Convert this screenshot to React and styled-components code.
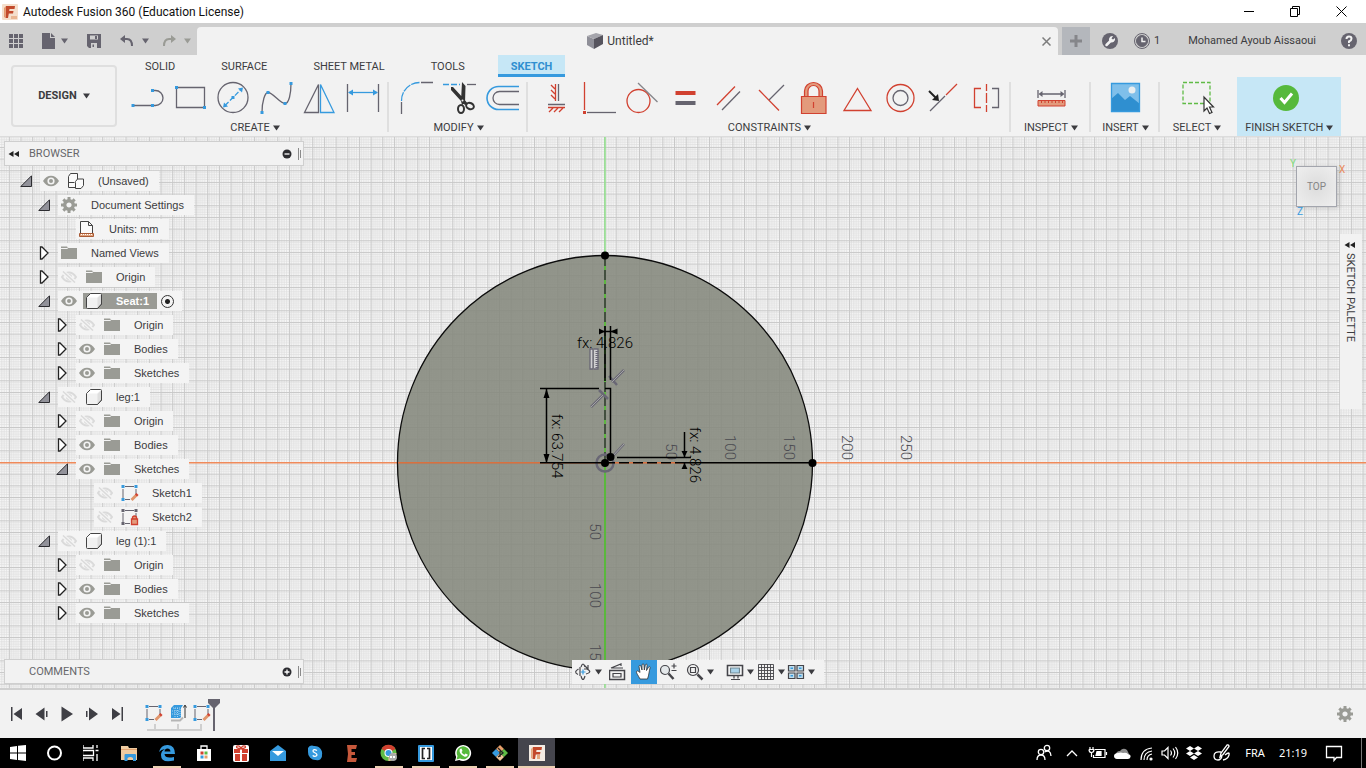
import React from 'react';
import styled, { createGlobalStyle } from 'styled-components';

const INK = '#66646f';
const RED = '#d14130';
const BLUE = '#369ade';
const GREY = '#9a9b95';

const GlobalStyle = createGlobalStyle`
  * {
    box-sizing: border-box;
  }

  body {
    margin: 0;
    overflow: hidden;
    color: #3c3c40;
    font-family: Roboto, 'Liberation Sans', sans-serif;
    font-size: 11px;
    line-height: 16px;
  }

  button {
    display: flex;
    align-items: center;
    justify-content: center;
    margin: 0;
    border: 0;
    padding: 0;
    color: inherit;
    background: none;
    font: inherit;
  }

  h1, h2, p, ul {
    margin: 0;
    padding: 0;
    font: inherit;
    list-style: none;
  }

  svg {
    display: block;
    flex: none;
  }
`;

const Page = styled.div`
  display: flex;
  flex-direction: column;
  height: 100vh;
  background: #f2f2f2;
`;

const TitleBar = styled.header`
  display: flex;
  align-items: center;
  height: 23px;
  padding: 0 2px;
  color: #111;
  background: #fff;
`;

const WindowTitle = styled.h1`
  flex: 1;
  margin-left: 5px;
  font-size: 12px;
`;

const WindowButton = styled.button`
  width: 46px;
  height: 22px;
`;

const DocumentBar = styled.div`
  display: flex;
  height: 32px;
  border-top: 4px solid #cfcfcf;
  background: #cfcfcf;
`;

const QuickTools = styled.div`
  display: flex;
  align-items: center;
  width: 197px;
  padding-left: 7px;
`;

const QuickButton = styled.button`
  width: ${(p) => p.$width}px;
  height: 28px;
  margin-left: ${(p) => p.$before || 0}px;
  gap: ${(p) => p.$gap || 0}px;
`;

const DocumentTab = styled.div`
  display: flex;
  flex: 1;
  align-items: center;
  border-radius: 4px 4px 0 0;
  padding: 0 4px 0 6px;
  background: #f2f2f2;
`;

const DocumentName = styled.p`
  display: flex;
  flex: 1;
  align-items: center;
  justify-content: center;
  gap: 4px;
  font-size: 12px;
`;

const SmallButton = styled.button`
  width: 16px;
  height: 20px;
`;

const Account = styled.div`
  display: flex;
  align-items: center;
  gap: 16px;
  padding-right: 9px;
`;

const NewTab = styled.button`
  width: 28px;
  height: 28px;
  margin: 0 -4px 0 4px;
  background: #b4b7bc;
`;

const Jobs = styled.button`
  gap: 4px;
`;

const UserName = styled.button`
  margin: 0 9px 0 12px;
`;

const Ribbon = styled.div`
  display: flex;
  height: 82px;
  border-bottom: 1px solid #dcdcdc;
`;

const WorkspaceButton = styled.button`
  width: 106px;
  height: 62px;
  margin: 10px 4px 0 11px;
  border: 2px solid #dfdfdf;
  border-radius: 4px;
  gap: 6px;
  font-weight: bold;
`;

const RibbonTabs = styled.nav`
  display: flex;
  gap: 20px;
  height: 22px;
  padding-left: 11px;
`;

const RibbonTab = styled.button`
  border-bottom: 3px solid ${(p) => (p.$active ? BLUE : 'transparent')};
  padding: 4px 13px 0;
  color: ${(p) => (p.$active ? '#2f8fd0' : 'inherit')};
  background: ${(p) => (p.$active ? '#c6e7f6' : 'none')};
  font-weight: ${(p) => (p.$active ? 'bold' : 'normal')};
`;

const Groups = styled.div`
  display: flex;
`;

const GroupBox = styled.section`
  display: flex;
  flex-direction: column;
  align-items: center;
  height: 59px;
  padding: 4px ${(p) => p.$pad}px 0;
  margin-left: ${(p) => (p.$finish ? 3 : 0)}px;
  background: ${(p) => (p.$finish ? '#c6e7f6' : 'none')};
`;

const Divider = styled.div`
  width: 2px;
  height: 50px;
  margin: 5px 0 0 -2px;
  background: #dfdfdf;
`;

const ToolRow = styled.div`
  display: flex;
`;

const Tool = styled.button`
  width: 43px;
  height: 34px;
`;

const GroupLabel = styled.button`
  height: 21px;
  padding-top: 4px;
  gap: 3px;
  white-space: nowrap;
`;

const Workspace = styled.main`
  position: relative;
  flex: 1;
  min-height: 0;
  overflow: hidden;
  background: #f7f7f7;
`;

const CanvasSvg = styled.svg`
  width: 100%;
  height: 100%;
  font-family: Roboto, sans-serif;
  font-size: 15px;
  font-weight: 300;
`;

const Sidebar = styled.aside`
  position: absolute;
  top: 4px;
  bottom: 4px;
  left: 4px;
  display: flex;
  flex-direction: column;
  justify-content: space-between;
  width: 300px;
`;

const PanelBar = styled.div`
  display: flex;
  align-items: center;
  height: 25px;
  border: 1px solid #cfcfcf;
  padding: 0 1px;
  color: #66666a;
  background: #f2f2f2;
`;

const PanelTitle = styled.h2`
  flex: 1;
  margin-left: 7px;
`;

const Tree = styled.ul`
  margin-top: 3px;
  font-family: 'Liberation Sans', sans-serif;
`;

const TreeRow = styled.li`
  display: flex;
  align-items: center;
  height: 24px;
  padding-left: ${(p) => 15 + p.$level * 18}px;
`;

const Toggle = styled.button`
  width: 21px;
  height: 20px;
  padding-right: 7px;
`;

const Strip = styled.div`
  display: flex;
  align-items: center;
  height: 20px;
  padding-right: ${(p) => (p.$selected ? 8 : 10)}px;
  background: #f4f4f4;
`;

const EyeButton = styled.button`
  width: 22px;
  height: 20px;
  margin-right: 3px;
`;

const NodeName = styled.span`
  display: flex;
  align-items: center;
  height: 16px;
  gap: 11px;
  padding-right: ${(p) => (p.$selected ? 8 : 0)}px;
  color: ${(p) => (p.$selected ? '#fff' : 'inherit')};
  background: ${(p) => (p.$selected ? GREY : 'none')};
  font-weight: ${(p) => (p.$selected ? 'bold' : 'normal')};
`;

const Radio = styled.input`
  appearance: none;
  width: 13px;
  height: 13px;
  margin: 0 0 0 4px;
  border: 1px solid #333;
  border-radius: 50%;
  background: radial-gradient(#222 0 2px, transparent 3px);
`;

const ViewCube = styled.button`
  position: absolute;
  top: 29px;
  right: 29px;
  width: 41px;
  height: 41px;
  border: 1px solid #a3a5ad;
  color: #858585;
  background: radial-gradient(#dcdcdc, #efefef);
  box-shadow: 2px 1px 5px rgba(0, 0, 0, 0.15);
  font-size: 10px;
`;

const AxisName = styled.span`
  position: absolute;
  top: ${(p) => p.$top}px;
  left: ${(p) => p.$left}px;
  color: ${(p) => p.$color};
  line-height: 12px;
`;

const Palette = styled.button`
  position: absolute;
  top: 97px;
  right: 4px;
  flex-direction: column;
  justify-content: flex-start;
  width: 22px;
  height: 175px;
  padding: 7px 2px 0 0;
  gap: 4px;
  background: #f2f2f2;
`;

const PaletteName = styled.span`
  writing-mode: vertical-rl;
`;

const NavBar = styled.div`
  position: absolute;
  bottom: 4px;
  left: calc(50% - 111px);
  display: flex;
  height: 24px;
  padding-right: 8px;
  background: #f2f2f2;
`;

const NavButton = styled.button`
  width: ${(p) => p.$width || 26}px;
  height: 24px;
  margin-left: ${(p) => (p.$spaced ? 7 : 0)}px;
  gap: 3px;
  background: ${(p) => (p.$active ? BLUE : 'none')};
`;

const Timeline = styled.footer`
  display: flex;
  align-items: center;
  height: 50px;
  border-top: 2px solid #cfcfcf;
  padding: 0 13px 0 4px;
`;

const PlayButton = styled.button`
  width: 25px;
  height: 30px;
`;

const Features = styled.div`
  position: relative;
  display: flex;
  flex: 1;
  align-items: flex-start;
  height: 48px;
  padding: 13px 0 0 13px;
`;

const Feature = styled.button`
  width: 24px;
  height: 20px;
`;

const Marker = styled.svg`
  position: absolute;
  top: 9px;
  left: 16px;
`;

const TaskBar = styled.footer`
  display: flex;
  height: 30px;
  color: #fff;
  background: #000;
`;

const TaskButton = styled.button`
  width: 37px;
  height: 30px;
  background: ${(p) => (p.$open ? 'linear-gradient(#ecd0b2, #ecd0b2) bottom no-repeat' : 'none')};
  background-size: ${(p) => (p.$active ? 37 : 28)}px 2px;
  background-color: ${(p) => (p.$active ? '#45454d' : 'transparent')};
`;

const Tray = styled.div`
  display: flex;
  align-items: center;
  margin-left: auto;
  padding-right: 4px;
  font-family: 'Noto Sans', 'Open Sans', sans-serif;
  font-size: 11px;
`;

const TrayButton = styled.button`
  width: ${(p) => p.$width || 24}px;
  height: 30px;
`;

const DesktopEdge = styled.div`
  width: 1px;
  height: 30px;
  margin-left: 7px;
  background: #777;
`;

const Caret = ({ color = '#3c3c40' }) => (
  <svg width="7" height="6" viewBox="0 0 7 6">
    <path d="M0 0.5h7L3.5 5.5z" fill={color} />
  </svg>
);

/* ribbon drawings share a 36 x 34 box: ink, blue and red strokes */
const Drawing = ({ children }) => (
  <svg width="36" height="34" viewBox="0 0 36 34" fill="none" stroke={INK} strokeWidth="1.3">
    {children}
  </svg>
);

const Dots = ({ at, color = BLUE }) =>
  at.map(([x, y]) => (
    <rect key={`${x}-${y}`} x={x - 1.5} y={y - 1.5} width="3" height="3" fill={color} stroke="none" />
  ));

const createTools = [
  ['Line', <><path d="M3 24.5h19M24 9.5h1.5a7.5 7.5 0 0 1 0 15H24" /><Dots at={[[3, 24.5], [22.5, 24.5], [22.5, 9.5]]} /></>],
  ['Rectangle', <><path d="M3.5 6.5h28v20h-28z" /><Dots at={[[3.5, 6.5], [31.5, 26.5]]} /></>],
  ['Circle', <><circle cx="17" cy="16.5" r="15" /><path d="M9 24.5L25 8.5" stroke={BLUE} strokeDasharray="5 2" /><path d="M7 26.5l1-5 4 4zM27 6.5l-5 1 4 4z" fill={BLUE} stroke="none" /><Dots at={[[17, 16.5]]} /></>],
  ['Spline', <><path d="M3 31.5C3 20 6 11.5 9 11.5c5 0 12 11 17 11 4 0 6-10 6-20" /><Dots at={[[3, 31.5], [9, 11.5], [26, 22.5], [32, 2.5]]} /></>],
  ['Mirror', <><path d="M16.5 3.5v28H2.5z" /><path d="M18.5 3.5v28H32z" stroke={BLUE} /></>],
  ['Sketch Dimension', <><path d="M2.5 3v28M33.5 3v28" /><path d="M4 11.5h28" stroke={BLUE} /><path d="M3 11.5l5-3v6zM33 11.5l-5-3v6z" fill={BLUE} stroke="none" /></>],
];

const modifyTools = [
  ['Fillet', <><path d="M3.5 33V21M23 1.5h12" /><path d="M3.5 20A18 18 0 0 1 21.5 1.5" stroke={BLUE} strokeDasharray="9 1" /></>],
  ['Trim', <><path d="M2 3.5h17" stroke={BLUE} strokeDasharray="6 2" /><path d="M26 3.5h9" /><g stroke="#333" strokeWidth="2"><ellipse cx="20" cy="28" rx="3" ry="4" /><ellipse cx="29" cy="25" rx="4" ry="3" transform="rotate(25 29 25)" /></g><path d="M21 1l3.5 4-.5 17-3 2-1-4zM10 6l2 0 11 12 4 5-3 1-4-4-10-11z" fill="#333" stroke="none" /><circle cx="21.5" cy="19.5" r="1" fill="#f2f2f2" stroke="none" /></>],
  ['Offset', <><path d="M35 5.5H14.5a11.5 11.5 0 0 0 0 23H35" stroke={BLUE} strokeWidth="1.6" /><path d="M35 10.5H15.5a6.5 6.5 0 0 0 0 13H35" /></>],
];

const constraintTools = [
  ['Horizontal/Vertical', <><path d="M21.5 3v17M11 23.5h17" /><path d="M18.5 3v17M11 26.5h17M14 4l4 4M14 9l4 4M14 14l4 4M16 27l-4 4M21 27l-4 4M26 27l-4 4" stroke={RED} /></>],
  ['Coincident', <><path d="M7 31.5h29" /><path d="M4.5 1v28" stroke={RED} /><Dots color={RED} at={[[4.5, 31.5]]} /></>],
  ['Tangent', <><circle cx="15.5" cy="20" r="11.5" stroke={RED} /><path d="M15 2l19.5 19" stroke="#85858a" /></>],
  ['Equal', <><path d="M9.5 12h20" stroke={RED} strokeWidth="4" /><path d="M9.5 22h20" strokeWidth="4" /></>],
  ['Parallel', <><path d="M8 24L26 5.5" stroke={RED} /><path d="M13 29L31 10.5" /></>],
  ['Perpendicular', <><path d="M7 9l20 20.5" stroke={RED} /><path d="M17 19L32 4" /></>],
  ['Fix/UnFix', <g stroke={RED} strokeWidth="1.2"><path d="M9.5 15.5V10a9 8.5 0 0 1 18 0v5.5H24V10a5.5 5.5 0 0 0-11 0v5.5z" fill="#e39a7c" /><path d="M6.5 15.5H31v17H6.5zM18.5 21v6" fill="#e39a7c" /></g>],
  ['Midpoint', <path d="M19.5 7.5L33 29.5H6z" stroke={RED} />],
  ['Concentric', <><circle cx="19.5" cy="17" r="13.5" stroke={RED} /><circle cx="19.5" cy="17" r="7.5" /></>],
  ['Collinear', <><path d="M6 30L21 15" /><path d="M22 14l11-11" stroke={RED} /><path d="M5 10l7 7" stroke="#222" strokeWidth="2" /><path d="M15 20l-7-1 6-6z" fill="#222" stroke="none" /></>],
  ['Symmetry', <><path d="M14 7.5H7.5v19H14M19.5 3v7M19.5 12v10M19.5 24v7" stroke={RED} /><path d="M25 7.5h6.5v19H25" /></>],
];

const inspectTools = [
  ['Measure', <><path d="M5 9v8M32 9v8M7 13h23" /><path d="M5.5 13l4-3v6zM31.5 13l-4-3v6z" fill={INK} stroke="none" /><path d="M5 19.5h27V25H5zM8.5 19v3M12 19v3M15.5 19v3M19 19v3M22.5 19v3M26 19v3M29.5 19v3" stroke={RED} fill="#e39a7c" strokeWidth="1" /></>],
];

const insertTools = [
  ['Insert Image', <><path d="M4 2h29v29H4z" fill="#7fbfea" stroke="none" /><path d="M4 18l7-6 7 7 5-4 10 8v8H4z" fill="#2f8fd0" stroke="none" /><circle cx="25" cy="9" r="3.5" fill="#e9eef0" stroke="none" /><path d="M4.5 2.5h28v28h-28z" stroke={BLUE} /></>],
];

const selectTools = [
  ['Select', <><path d="M4 1.5h27v21H4z" stroke="#5fbb45" strokeDasharray="4 2" /><path d="M25 16v14l3-3 2.5 5.5 2.5-1-2.5-5.5h4z" fill="#fff" stroke="#333" strokeWidth="1.2" /></>],
];

const finishTools = [
  ['Finish Sketch', <><circle cx="15" cy="17" r="13" fill="#56b93c" stroke="none" /><path d="M9.5 17l4 4.5 7.5-9" stroke="#fff" strokeWidth="3" /></>],
];

const ribbonGroups = [
  { name: 'CREATE', tools: createTools, pad: 5 },
  { name: 'MODIFY', tools: modifyTools, pad: 5 },
  { name: 'CONSTRAINTS', tools: constraintTools, pad: 5 },
  { name: 'INSPECT', tools: inspectTools, pad: 13 },
  { name: 'INSERT', tools: insertTools, pad: 11 },
  { name: 'SELECT', tools: selectTools, pad: 13 },
  { name: 'FINISH SKETCH', tools: finishTools, pad: 8, finish: true },
];

function ToolGroup({ group, last }) {
  return (
    <>
      <GroupBox $pad={group.pad} $finish={group.finish}>
        <ToolRow>
          {group.tools.map(([name, art]) => (
            <Tool key={name} aria-label={name}>
              <Drawing>{art}</Drawing>
            </Tool>
          ))}
        </ToolRow>
        <GroupLabel>
          {group.name}
          <Caret />
        </GroupLabel>
      </GroupBox>
      {last ? null : <Divider />}
    </>
  );
}

const FusionLogo = () => (
  <svg width="16" height="16" viewBox="0 0 16 16">
    <rect width="16" height="16" rx="1" fill="#f5dfcc" />
    <path d="M9 12h6v3H9z" fill="#eab793" />
    <path d="M4 2h9l-.5 3h-5l-.3 2h4.3L11 9.5H6.800L6 14H3.500z" fill="#c2492b" />
    <path d="M4 2L2 4v9l1.500 1z" fill="#e59a6f" />
  </svg>
);

const Eye = ({ off }) =>
  off ? (
    <svg width="16" height="12" viewBox="0 0 16 12" fill="none" stroke="#dadada" strokeWidth="2">
      <path d="M1 6c4-6 10-6 14 0-4 6-10 6-14 0z" />
      <circle cx="8" cy="6" r="2" fill="#dadada" />
      <path d="M1.5.5l13 11" stroke="#f4f4f4" strokeWidth="4" />
      <path d="M2 .5l12 11" strokeWidth="1.5" />
    </svg>
  ) : (
    <svg width="16" height="12" viewBox="0 0 16 12">
      <path d="M0 6c4-7 12-7 16 0-4 7-12 7-16 0z" fill={GREY} />
      <circle cx="8" cy="6" r="3.6" fill="#f4f4f4" />
      <circle cx="8" cy="6" r="2" fill={GREY} />
    </svg>
  );

const GearShape = () => (
  <svg width="22" height="16" viewBox="-11 -8 22 16">
    <circle r="4.3" fill="none" stroke={GREY} strokeWidth="3.4" />
    {[0, 45, 90, 135].map((a) => (
      <path key={a} d="M-1.5-8h3v3h-3zM-1.5 5h3v3h-3z" fill={GREY} transform={`rotate(${a})`} />
    ))}
  </svg>
);

const SketchIcon = ({ locked }) => (
  <svg width="22" height="18" viewBox="0 0 22 18" fill="none" stroke={INK}>
    <path d="M6 2.5h9M17 5v5M4 5v9M6 15.5h5" />
    <Dots color={locked ? INK : BLUE} at={[[4, 2.5], [17, 2.5], [4, 15.5]]} />
    {locked ? (
      <path d="M12.5 11h6v5.5h-6zM13.5 11V9q2-2 4 0v2" fill="#e39a7c" stroke={RED} strokeWidth="1.3" />
    ) : (
      <>
        <path d="M12.5 16l5-5" stroke="#e0956c" strokeWidth="3" />
        <path d="M17 11.5l1.5-1.5" stroke={RED} strokeWidth="3" />
      </>
    )}
  </svg>
);

const nodeIcons = {
  folder: (
    <svg width="22" height="16" viewBox="0 0 22 16">
      <path d="M3 1.5h6L10.5 3H19v11H3z" fill={GREY} />
      <path d="M3 3.5h6l1.5-1" stroke="#f4f4f4" fill="none" />
    </svg>
  ),
  root: (
    <svg width="22" height="16" viewBox="0 0 22 16" fill="#fbfbfb" stroke="#444" strokeLinejoin="round">
      <path d="M3.5 3.5l2-3h7v6l-1 2v6h-8z" />
      <path d="M10.5 8.5l2-2.5h6v6.5l-2.5 3h-5.5v-6z" />
      <path d="M3.5 9.5h6" fill="none" />
    </svg>
  ),
  body: (
    <svg width="22" height="16" viewBox="0 0 22 16" fill="#f1f1f1" stroke="#444" strokeLinejoin="round">
      <path d="M3.5 4.5l4-4h10a1 1 0 0 1 1 1V11l-4 4.5h-10a1 1 0 0 1-1-1z" />
      <path d="M4 4.5L8 1h10l-4 3.5z" fill="#fff" stroke="none" />
      <path d="M14.500 5v10l4-4.500V1z" fill="#dedede" stroke="none" />
      <path d="M14.500 15.500l4-4.500V1.500" fill="none" />
    </svg>
  ),
  gear: <GearShape />,
  units: (
    <svg width="22" height="16" viewBox="0 0 22 16">
      <path d="M4.5 12V.5h8l4 4V12M12.5.5v4h4" fill="#fafafa" stroke="#444" />
      <path d="M3.5 12.5h14v3h-14z" fill="#e0a37c" stroke="#a85a35" />
      <path d="M5 13.5h12" stroke="#fff" strokeDasharray="1 1" />
    </svg>
  ),
  sketch: <SketchIcon />,
  locked: <SketchIcon locked />,
};

const tree = [
  { name: '(Unsaved)', level: 0, icon: 'root', open: true, eye: 'on' },
  { name: 'Document Settings', level: 1, icon: 'gear', open: true },
  { name: 'Units: mm', level: 2, icon: 'units' },
  { name: 'Named Views', level: 1, icon: 'folder', open: false },
  { name: 'Origin', level: 1, icon: 'folder', open: false, eye: 'off' },
  { name: 'Seat:1', level: 1, icon: 'body', open: true, eye: 'on', selected: true },
  { name: 'Origin', level: 2, icon: 'folder', open: false, eye: 'off' },
  { name: 'Bodies', level: 2, icon: 'folder', open: false, eye: 'on' },
  { name: 'Sketches', level: 2, icon: 'folder', open: false, eye: 'on' },
  { name: 'leg:1', level: 1, icon: 'body', open: true, eye: 'off' },
  { name: 'Origin', level: 2, icon: 'folder', open: false, eye: 'off' },
  { name: 'Bodies', level: 2, icon: 'folder', open: false, eye: 'on' },
  { name: 'Sketches', level: 2, icon: 'folder', open: true, eye: 'on' },
  { name: 'Sketch1', level: 3, icon: 'sketch', eye: 'off' },
  { name: 'Sketch2', level: 3, icon: 'locked', eye: 'off' },
  { name: 'leg (1):1', level: 1, icon: 'body', open: true, eye: 'off' },
  { name: 'Origin', level: 2, icon: 'folder', open: false, eye: 'off' },
  { name: 'Bodies', level: 2, icon: 'folder', open: false, eye: 'on' },
  { name: 'Sketches', level: 2, icon: 'folder', open: false, eye: 'on' },
];

const Triangle = ({ open }) =>
  open ? (
    <svg width="12" height="12" viewBox="0 0 12 12">
      <path d="M11.5.8v10.7H.8z" fill="#92929a" stroke="#2c2c30" />
    </svg>
  ) : (
    <svg width="11" height="14" viewBox="0 0 11 14">
      <path d="M1.5 1H3l6 6-6 6H1.5z" fill="#fff" stroke="#222" strokeWidth="1.3" />
    </svg>
  );

function TreeNode({ node }) {
  const isLeaf = node.open === undefined;

  return (
    <TreeRow $level={node.level}>
      <Toggle as={isLeaf ? 'span' : 'button'} aria-label={isLeaf ? undefined : `Toggle ${node.name}`}>
        {isLeaf ? null : <Triangle open={node.open} />}
      </Toggle>
      <Strip $selected={node.selected}>
        {node.eye ? (
          <EyeButton aria-label={`Visibility of ${node.name}`}>
            <Eye off={node.eye === 'off'} />
          </EyeButton>
        ) : null}
        <NodeName $selected={node.selected}>
          {nodeIcons[node.icon]}
          {node.name}
        </NodeName>
        {node.selected ? <Radio type="radio" defaultChecked aria-label="Activate Seat:1" /> : null}
      </Strip>
    </TreeRow>
  );
}

const Rewind = () => (
  <svg width="12" height="8" viewBox="0 0 12 8" fill="#222">
    <path d="M5.5 1v6L.5 4zM11 1v6L6 4z" />
  </svg>
);

const RoundSign = ({ plus }) => (
  <svg width="16" height="12" viewBox="0 0 16 12">
    <circle cx="5" cy="6" r="4.5" fill="#2c2c30" />
    <path d={plus ? 'M2.5 6h5M5 3.5v5' : 'M2.5 6h5'} stroke="#fff" strokeWidth="1.3" />
  </svg>
);

const Grip = () => (
  <svg width="4" height="12" viewBox="0 0 4 12" stroke="#8a8a8a">
    <path d="M.5 0v12M2.5 2v8" />
  </svg>
);

/* one grid cell is 10 mm, split in five */
const CELL = 11.67;
const STEP = CELL / 5;

const rulerAcross = [[61, '50'], [120, '100'], [179, '150'], [237, '200'], [296, '250']];
const rulerDown = [[77, '50'], [145, '100'], [206, '150']];

const Rotated = ({ x, y, children }) => (
  <text transform={`translate(${x} ${y}) rotate(90)`}>{children}</text>
);

function SketchCanvas() {
  return (
    <CanvasSvg role="img" aria-label="Sketch">
      <defs>
        <pattern id="grid" x="604" y="325" width={CELL} height={CELL} patternUnits="userSpaceOnUse">
          {[1, 2, 3, 4].map((n) => (
            <path
              key={n}
              d={`M${n * STEP} 0V${CELL}M0 ${n * STEP}H${CELL}`}
              stroke="#dfdfdf"
              strokeWidth="0.8"
            />
          ))}
          <path d={`M0.5 0V${CELL}M0 0.5H${CELL}`} stroke="#c8c8c8" strokeWidth="1" />
        </pattern>
      </defs>
      <rect width="100%" height="100%" fill="url(#grid)" />
      <g transform="translate(605 326)">
        <path d="M0-400V400" stroke="#8fe08a" strokeWidth="1.5" />
        <path d="M-2000-.3H3000" stroke="#f08a5a" strokeWidth="1.6" />
        <circle r="207.5" fill="#82867a" fillOpacity="0.86" />
        <circle r="207.5" fill="none" stroke="#0c0c0c" strokeWidth="1.3" />

        <path d="M-207-.3H80" stroke="#d9703f" strokeWidth="1.6" />
        <path d="M0 0V207" stroke="#4fc22c" strokeWidth="1.6" />
        <path d="M0 0V-207" stroke="#4fc22c" strokeWidth="1.5" />
        <path d="M0-207V0" stroke="#3f3d40" strokeWidth="1.7" strokeDasharray="10 4" />

        <g fill="#4a4a50" textAnchor="end">
          {rulerAcross.map(([x, n]) => (
            <Rotated key={n} x={x} y="-3">{n}</Rotated>
          ))}
          {rulerDown.map(([y, n]) => (
            <Rotated key={n} x="-15" y={y}>{n}</Rotated>
          ))}
        </g>

        <g fill="none" stroke="#696775" strokeWidth="1.3">
          <circle r="8.5" strokeWidth="2.5" />
          <path d="M19-93L7-81M4-87l8 9M-14-56l12-12M-6-73l9 9M7-6L19-19" strokeWidth="2.5" />
          <path d="M19-93L7-81M-14-56l12-12M7-6L19-19" stroke="#a3a4a3" strokeWidth="1" />
          <path d="M-15-114h3v20h-3zM-11-114h4v20h-4" fill="#cfcfd0" />
          <path d="M-8-112v17" strokeDasharray="1 1" strokeWidth="3" />
        </g>

        <g stroke="#000" strokeWidth="1.5" fill="none">
          <path d="M0-137v55M5.5-137v54M0-74.5H5.5V-6M-65-74.5H-6M-58.5-74V0" />
          <path d="M12-5.5H86M80-.3H207M79.5-31V-6M79.5 0V6M-6-131.5h18" />
          <path d="M-65-.3H0" />
          <path d="M0-.3H80" strokeDasharray="10 4" />
        </g>
        <g fill="#000">
          <path d="M0-131.5l-6-3v6zM5.5-131.5l7-3v6z" />
          <path d="M-58.5-74l-3 9h6zM-58.5 0l-3-9h6zM79.5-6l-3-6h6zM79.5 0l-3 6h6z" />
          <circle r="4" />
          <circle cx="5.5" cy="-6" r="4" />
          <circle cx="207.5" r="4" />
          <circle cy="-207.5" r="4" />
          <text x="-28" y="-115">fx: 4.826</text>
          <Rotated x="-53" y="-49">fx: 63.754</Rotated>
          <Rotated x="85" y="-36">fx: 4.826</Rotated>
        </g>
      </g>
    </CanvasSvg>
  );
}

/* 18 x 18 icons of the navigation bar */
const NavIcon = ({ children }) => (
  <svg width="18" height="18" viewBox="0 0 18 18" fill="none" stroke="#45454a" strokeWidth="1.2">
    {children}
  </svg>
);

const navItems = [
  { name: 'Orbit', caret: true, width: 32, art: <><path d="M7 4q2-6 4 0M7 13q2 7 4 0M6 4v9M4.5 6Q-1 9 4 11.5M13 6q6 3-1 5M10 2l4 4M14 2v4h-4" /><path d="M6.5 9h5M9 6.500v5" stroke={BLUE} /></> },
  { name: 'Look At', width: 27, art: <><path d="M.5 7.5h15v9H.5z" strokeWidth="1.5" /><path d="M4 10.5h8V14H4zM2 5l10-4v2M3 5h11" /></> },
  { name: 'Pan', active: true, art: <path d="M5 16C3 12 1 10 1.500 8.500s2.500 0 3.500 1L4 3.500c0-1.500 1.700-1.500 2 0L7 7V2c.2-1.500 2-1.500 2 0l.3 5 1-5c.5-1.300 2-1 1.800.3L11.500 7.500l2-3.500c.8-1 2-.4 1.600.8-1 3-1 7-2.600 11.200z" fill="#fff" stroke="#333" strokeWidth=".8" /> },
  { name: 'Zoom', width: 24, art: <><circle cx="5" cy="7" r="4.5" fill="#e4e8ea" /><path d="M8.5 10.5l5 5.5" strokeWidth="2.5" /><path d="M11.5 3h5M14 .5v5M11.5 7.5h5" /></> },
  { name: 'Fit', caret: true, width: 37, art: <><circle cx="7" cy="7" r="5.5" /><path d="M4.5 4.5h5v5h-5z" /><path d="M11.5 11.5l5 5" strokeWidth="2.5" /></> },
  { name: 'Display Settings', caret: true, spaced: true, width: 30, art: <><path d="M1.5 2.5h15v10h-15z" fill="#fff" strokeWidth="1.6" /><path d="M4.5 5h9v5h-9z" fill="#a9d3ea" stroke="#718791" /><path d="M8 13v2.5M12 13v2.5M5 16.5h9" /></> },
  { name: 'Grid and Snaps', caret: true, width: 31, art: <path d="M1.5 1.5h15v15h-15zM4.5 1v16M7.5 1v16M10.5 1v16M13.5 1v16M1 4.5h16M1 7.5h16M1 10.5h16M1 13.5h16" strokeWidth=".9" /> },
  { name: 'Viewports', caret: true, width: 30, art: <><path d="M1.5 2.5H8V8H1.5zM10 2.5h6.5V8H10zM1.5 10H8v5.5H1.5zM10 10h6.5v5.5H10z" fill="#c0ddec" /><path d="M3.5 5.2H6M12 5.2h2.5M3.5 12.8H6M12 12.8h2.5" stroke={BLUE} strokeWidth="1.5" /></> },
];

const playIcons = [
  ['Go to start', 'M2 1h1.5v14H2zM13 2v12L4.5 8z'],
  ['Step back', 'M1.5 8l9-6.5v13zM12 5h1.5v6H12z'],
  ['Play', 'M2.5.5L14 8 2.5 15.5z'],
  ['Step forward', 'M2 5h1.5v6H2zM5 1.5L14 8l-9 6.5z'],
  ['Go to end', 'M3 2l8.5 6L3 14zM12.5 1H14v14h-1.5z'],
];

const TaskIcon = ({ children }) => (
  <svg width="20" height="20" viewBox="0 0 20 20">
    {children}
  </svg>
);

const tasks = [
  { name: 'Start', art: <path d="M1 4l7-1v6.5H1zM9 2.8L17 2v7.5H9zM1 10.5h7V17l-7-1zM9 10.5h8V18l-8-1z" fill="#fff" /> },
  { name: 'Cortana', art: <circle cx="8.5" cy="10" r="6.5" fill="none" stroke="#fff" strokeWidth="2" /> },
  { name: 'Task View', art: <path d="M0 2v3h10V2M-.5 7.500h11v5h-11zM0 18v-3h10v3M14 2v3M14 11v7M12.500 7.500h3" fill="none" stroke="#fff" strokeWidth="1.3" /> },
  { name: 'File Explorer', art: <><path d="M1 3h7l1 2h8v12H1z" fill="#efcba0" /><path d="M1 6h16v1H1z" fill="#e3a370" /><path d="M4.500 18v-6q0-1 1-1h9.500q1 0 1 1v6h-3v-3q-2.800-2-5.500 0v3z" fill={BLUE} /></> },
  { name: 'Microsoft Edge', open: true, art: <path d="M2 9Q4 1.500 11 2q7 .7 7 9H7.500q.5 5 9.500 3v3.500Q4 20.500 4 12q0-4 4-6-4 .5-6 3zM7.500 8.500h6q-.4-3-3-3t-3 3z" fill={BLUE} fillRule="evenodd" /> },
  { name: 'Microsoft Store', art: <><path d="M3 6h14v12H3z" fill="#fff" /><path d="M7 6V3h6v3" fill="none" stroke="#fff" strokeWidth="1.3" /><path d="M6.500 8.500h3v3h-3z" fill={RED} /><path d="M10.500 8.500h3v3h-3z" fill="#5fbb45" /><path d="M6.500 12.500h3v3h-3z" fill={BLUE} /><path d="M10.500 12.500h3v3h-3z" fill="#e8a06a" /></> },
  { name: 'Gifts', art: <><rect x="2" y="2" width="16" height="17" rx="2" fill="#fff" /><path d="M3 6h14v4H3zM4 11h12v7H4z" fill={RED} /><path d="M10 6v12" stroke="#fff" strokeWidth="2" /><path d="M10 6Q4 5 6 3q3-1 4 3 1-4 4-3 2 2-4 3" fill="none" stroke={RED} strokeWidth="1.3" /></> },
  { name: 'Mail', art: <><path d="M2 8l8-6 8 6v10H2z" fill={BLUE} /><path d="M4 8h12l-6 5z" fill="#fff" /></> },
  { name: 'Skype', art: <><path d="M3 5a5 5 0 0 1 6-2 7.500 7.500 0 0 1 8 9 4.500 4.500 0 0 1-6 5 7.500 7.500 0 0 1-8-8z" fill={BLUE} /><path d="M12 7.500q-3.500-2-4 .3c-.3 2.200 4 1.700 4 4.200-.8 2-3.500 1.500-4.200.3" fill="none" stroke="#fff" strokeWidth="1.3" /></> },
  { name: 'Epic', art: <path d="M5 2h10l-1 4H9.500v3H13v3H9.500v3H15l-1 4H5l1-8z" fill="#c6583b" /> },
  { name: 'Chrome', open: true, art: <><circle cx="9.500" cy="10" r="8" fill="#5fbb45" /><path d="M9.500 10L2.500 6a8 8 0 0 1 14 0z" fill={RED} /><path d="M9.500 10h8a8 8 0 0 1-8 8z" fill="#f1c69a" /><circle cx="9.500" cy="10" r="4" fill="#fff" /><circle cx="9.500" cy="10" r="3" fill={BLUE} /><circle cx="14" cy="14" r="4" fill="#aaa" /><path d="M11 14h6" stroke="#fff" strokeWidth="2" strokeDasharray="2 1" /></> },
  { name: 'Brackets', open: true, art: <><rect x="2" y="2" width="16" height="17" rx="1" fill={BLUE} /><path d="M4 4h12v13H4z" fill="#fff" /><path d="M9 5.500H6.500v10H9M11 5.500h2.500v10H11" fill="none" stroke="#222" strokeWidth="1.7" /></> },
  { name: 'WhatsApp', open: true, art: <><path d="M2 18l1.200-4a8 8 0 1 1 3 3z" fill="#fff" /><path d="M3.500 16.500l1-3.500a6.500 6.500 0 1 1 2.500 2.500z" fill="#56b93c" /><path d="M7 6l1.500-.5 1 2.500-1 1q1 2 3 2.700l1-1.200 2.200 1c0 2-2 2.500-3.500 2C8 12 5.500 9 7 6z" fill="#fff" /></> },
  { name: 'Git', open: true, art: <><path d="M10 2l4 4-4 4-4-4z" fill="#e8a06a" /><path d="M14 6l4 4-4 4-4-4z" fill="#5fbb45" /><path d="M6 6l4 4-4 4-4-4z" fill={BLUE} /><path d="M10 10l4 4-4 4-4-4z" fill="#f1c69a" /><path d="M8 5l5 5-5 4M10 8v6" fill="none" stroke="#222" strokeWidth="1.3" /></> },
  { name: 'Autodesk Fusion 360', open: true, active: true, art: <g transform="translate(2 2)"><rect width="16" height="16" fill="#f4ece4" /><path d="M4 2h9l-.5 3h-5l-.3 2h4.3L11 9.5H6.800L6 14H3.500z" fill="#c2492b" /><path d="M4 2L2 4v9l1.500 1zM8 10h3v4H8z" fill="#e5aa80" /></g> },
];

const trayIcons = [
  { name: 'People', width: 28, art: <g fill="none" stroke="#fff" strokeWidth="1.3"><circle cx="7" cy="9" r="2.7" /><circle cx="13" cy="5" r="2.7" /><path d="M3 17q0-5 4-5t4 5M10.500 9q6-3 6.500 4" /></g> },
  { name: 'Show hidden icons', width: 28, art: <path d="M5 13l5-5 5 5" fill="none" stroke="#fff" strokeWidth="1.3" /> },
  { name: 'Battery', art: <g fill="none" stroke="#fff" strokeWidth="1.2"><path d="M7 6.500h10v8H5.500V12M18.500 9v3M2 4v2M5 4v2M1 6.500h5q0 3-2.500 3T1 6.500M3.500 10v4" /><path d="M9 8.500h4v4H8z" fill="#fff" /></g> },
  { name: 'OneDrive', art: <><path d="M4 12q0-4 4-4 3-4 7-1l2 4z" fill="#8f8f8f" /><path d="M5 16q-3-.3-3-3t4-3q3-1 5 0 3-1 5 1 3 .5 2.500 3-.5 2-2.500 2z" fill="#fff" /></> },
  { name: 'Network', art: <g fill="none" stroke="#fff" strokeWidth="1.2"><path d="M5 17Q5 6 16 5M8 17q0-8 8-9M11 17q0-5 5-6" /><circle cx="15" cy="16" r="1" fill="#fff" /></g> },
  { name: 'Volume', art: <path d="M2 8h2.500L8 4.500v11L4.500 12H2zM10.500 7.500q2 2.500 0 5M13 5.500q3.500 4.500 0 9M15.500 4q4.500 6 0 12" fill="none" stroke="#fff" strokeWidth="1.2" /> },
  { name: 'Dropbox', art: <path d="M6 3L2 5.500 6 8l4-2.500zM14 3l-4 2.500L14 8l4-2.500zM6 8l-4 2.500L6 13l4-2.500zM14 8l-4 2.500 4 2.500 4-2.500zM10 12l-4 2.500 4 2.500 4-2.500z" fill="#fff" /> },
  { name: 'Windows Ink', width: 32, art: <path d="M8 14l1-4 6-8q2-.5 2 1.500l-6 8zM9 9q-7-1-7 4 0 4 4 4 3 0 4-4M13 12q5-4 4 0t-6 5" fill="none" stroke="#fff" strokeWidth="1.3" /> },
];

export default function App() {
  return (
    <Page>
      <GlobalStyle />
      <TitleBar>
        <FusionLogo />
        <WindowTitle>Autodesk Fusion 360 (Education License)</WindowTitle>
        <WindowButton aria-label="Minimize">
          <svg width="11" height="11" stroke="#000"><path d="M0 5.5h10" /></svg>
        </WindowButton>
        <WindowButton aria-label="Restore">
          <svg width="11" height="11" fill="none" stroke="#000">
            <path d="M.5 2.5h7v8h-7zM2.5 2.5v-2h7v8h-2" />
          </svg>
        </WindowButton>
        <WindowButton aria-label="Close">
          <svg width="11" height="11" stroke="#000"><path d="M.5.5l10 10M10.5.5l-10 10" /></svg>
        </WindowButton>
      </TitleBar>

      <DocumentBar>
        <QuickTools>
          <QuickButton $width={18} aria-label="Data panel">
            <svg width="14" height="14" fill={INK}>
              {[0, 5, 10].map((y) => (
                <path key={y} d={`M0 ${y}h4v4H0zM5 ${y}h4v4H5zM10 ${y}h4v4h-4z`} />
              ))}
            </svg>
          </QuickButton>
          <QuickButton $width={59} $gap={5} aria-label="File">
            <svg width="14" height="16" fill={INK}>
              <path d="M0 0h8v5h5v11H0zM9 0l4 4H9z" />
            </svg>
            <Caret color={INK} />
          </QuickButton>
          <QuickButton $width={20} aria-label="Save">
            <svg width="14" height="14" fill={INK}>
              <path d="M0 0h14v14H2l-2-2z" />
              <path d="M3 1.5h8v4H3zM4 9h6v5H4z" fill="#cfcfcf" />
              <path d="M8 2h2v3H8zM5.5 10.5H7V13H5.5z" />
            </svg>
          </QuickButton>
          <QuickButton $width={33} $before={14} $gap={8} aria-label="Undo">
            <svg width="14" height="12" viewBox="0 0 14 12" fill="none" stroke={INK} strokeWidth="2">
              <path d="M3 4h4q5 0 5 7" />
              <path d="M0 4l5-4v8z" fill={INK} stroke="none" />
            </svg>
            <Caret color={INK} />
          </QuickButton>
          <QuickButton $width={33} $before={9} $gap={8} aria-label="Redo">
            <svg width="14" height="12" viewBox="0 0 14 12" fill="none" stroke={GREY} strokeWidth="2">
              <path d="M11 4H7q-5 0-5 7" />
              <path d="M14 4L9 0v8z" fill={GREY} stroke="none" />
            </svg>
            <Caret color={GREY} />
          </QuickButton>
        </QuickTools>
        <DocumentTab>
          <DocumentName>
            <svg width="16" height="16" viewBox="0 0 16 16">
              <path d="M0 3l7 3v10l-7-4z" fill="#8f8f98" />
              <path d="M0 3l9-3 7 2-9 4z" fill="#a5a5ac" />
              <path d="M7 6l9-4v9l-9 5z" fill="#56545e" />
            </svg>
            Untitled*
          </DocumentName>
          <SmallButton aria-label="Close tab">
            <svg width="9" height="9" stroke="#7d7d7d" strokeWidth="1.5"><path d="M.5.5l8 8M8.5.5l-8 8" /></svg>
          </SmallButton>
        </DocumentTab>
        <Account>
          <NewTab aria-label="New tab">
            <svg width="14" height="14" stroke="#85868a" strokeWidth="3"><path d="M1 7h12M7 1v12" /></svg>
          </NewTab>
          <SmallButton aria-label="Extensions">
            <svg width="16" height="16" viewBox="0 0 16 16">
              <circle cx="8" cy="8" r="8" fill={INK} />
              <path d="M4.5 12L9 7.5" stroke="#f2f2f2" strokeWidth="2.5" strokeLinecap="round" />
              <path d="M8 9a3.500 3.500 0 0 1 3-6L9.500 5.500l1.500 1 2-1.500a3.500 3.500 0 0 1-5 4z" fill="#f2f2f2" />
            </svg>
          </SmallButton>
          <Jobs aria-label="Job status">
            <svg width="16" height="16" viewBox="0 0 16 16" fill="none" stroke={INK}>
              <circle cx="8" cy="8" r="7.5" />
              <circle cx="8" cy="8" r="5.5" fill={INK} />
              <path d="M8 4.5v4h3.5" stroke="#f2f2f2" strokeWidth="1.5" />
            </svg>
            1
          </Jobs>
          <UserName>Mohamed Ayoub Aissaoui</UserName>
          <SmallButton aria-label="Help">
            <svg width="16" height="16" viewBox="0 0 16 16" fill="none">
              <circle cx="8" cy="8" r="8" fill={INK} />
              <path d="M5.5 6q0-2.500 2.500-2.500t2.500 2.300Q10.500 7.500 8 8.500V10M8 11.200v2" stroke="#f2f2f2" strokeWidth="2" />
            </svg>
          </SmallButton>
        </Account>
      </DocumentBar>

      <Ribbon>
        <WorkspaceButton>
          DESIGN
          <Caret />
        </WorkspaceButton>
        <div>
          <RibbonTabs>
            {['SOLID', 'SURFACE', 'SHEET METAL', 'TOOLS', 'SKETCH'].map((name) => (
              <RibbonTab key={name} $active={name === 'SKETCH'}>{name}</RibbonTab>
            ))}
          </RibbonTabs>
          <Groups>
            {ribbonGroups.map((group, i) => (
              <ToolGroup key={group.name} group={group} last={i >= ribbonGroups.length - 2} />
            ))}
          </Groups>
        </div>
      </Ribbon>

      <Workspace>
        <SketchCanvas />
        <Sidebar>
          <div>
            <PanelBar>
              <SmallButton aria-label="Collapse browser"><Rewind /></SmallButton>
              <PanelTitle>BROWSER</PanelTitle>
              <SmallButton aria-label="Browser options"><RoundSign /></SmallButton>
              <Grip />
            </PanelBar>
            <Tree>
              {tree.map((node, i) => (
                <TreeNode key={i} node={node} />
              ))}
            </Tree>
          </div>
          <PanelBar>
            <SmallButton as="span" />
            <PanelTitle>COMMENTS</PanelTitle>
            <SmallButton aria-label="Add comment"><RoundSign plus /></SmallButton>
            <Grip />
          </PanelBar>
        </Sidebar>
        <ViewCube>
          TOP
          <AxisName $top={-9} $left={-7} $color="#7fdc78">Y</AxisName>
          <AxisName $top={-3} $left={42} $color="#ea8a5c">X</AxisName>
          <AxisName $top={39} $left={0} $color={BLUE}>Z</AxisName>
        </ViewCube>
        <Palette>
          <Rewind />
          <PaletteName>SKETCH PALETTE</PaletteName>
        </Palette>
        <NavBar>
          {navItems.map((item) => (
            <NavButton
              key={item.name}
              aria-label={item.name}
              $width={item.width}
              $active={item.active}
              $spaced={item.spaced}
            >
              <NavIcon>{item.art}</NavIcon>
              {item.caret ? <Caret /> : null}
            </NavButton>
          ))}
        </NavBar>
      </Workspace>

      <Timeline>
        {playIcons.map(([name, d]) => (
          <PlayButton key={name} aria-label={name}>
            <svg width="16" height="16" fill="#3f3f45"><path d={d} /></svg>
          </PlayButton>
        ))}
        <Features>
          <Feature aria-label="Sketch1"><SketchIcon /></Feature>
          <Feature aria-label="Extrude1">
            <svg width="18" height="18" viewBox="0 0 18 18">
              <path d="M2 4l3-3h9l-2 3v9l-1 1H2z" fill={BLUE} />
              <path d="M4 4h7v9M6 4v9M8.5 4v9M3 7h8M3 10h8" fill="none" stroke="#a8d2ee" strokeDasharray="1 1" />
              <path d="M2 16.5h9l3-3" fill="none" stroke="#b5b5b5" strokeWidth="2" />
              <path d="M16 2v12M14.5 3.5L16 1l1.500 2.500" fill="none" stroke="#333" />
            </svg>
          </Feature>
          <Feature aria-label="Sketch2"><SketchIcon /></Feature>
          <Marker width="76" height="34" viewBox="0 0 76 34">
            <path d="M2 31h55M10 25v6M33 25v6M56 25v6" fill="none" stroke="#cfcfcf" strokeWidth="2" />
            <path d="M63 0h12v4l-5 5h-2l-5-5z" fill={INK} />
            <path d="M69 8v24" stroke={INK} strokeWidth="2" />
          </Marker>
        </Features>
        <SmallButton aria-label="Timeline settings"><GearShape /></SmallButton>
      </Timeline>

      <TaskBar>
        {tasks.map((task) => (
          <TaskButton key={task.name} aria-label={task.name} $open={task.open} $active={task.active}>
            <TaskIcon>{task.art}</TaskIcon>
          </TaskButton>
        ))}
        <Tray>
          {trayIcons.map((item) => (
            <TrayButton key={item.name} aria-label={item.name} $width={item.width}>
              <TaskIcon>{item.art}</TaskIcon>
            </TrayButton>
          ))}
          <TrayButton $width={34}>FRA</TrayButton>
          <TrayButton $width={42}>21:19</TrayButton>
          <TrayButton $width={40} aria-label="Notifications">
            <svg width="18" height="18" fill="none" stroke="#fff" strokeWidth="1.3">
              <path d="M1.5 2.5h15v11h-5l-2.500 3v-3H1.500z" />
            </svg>
          </TrayButton>
          <DesktopEdge />
        </Tray>
      </TaskBar>
    </Page>
  );
}
